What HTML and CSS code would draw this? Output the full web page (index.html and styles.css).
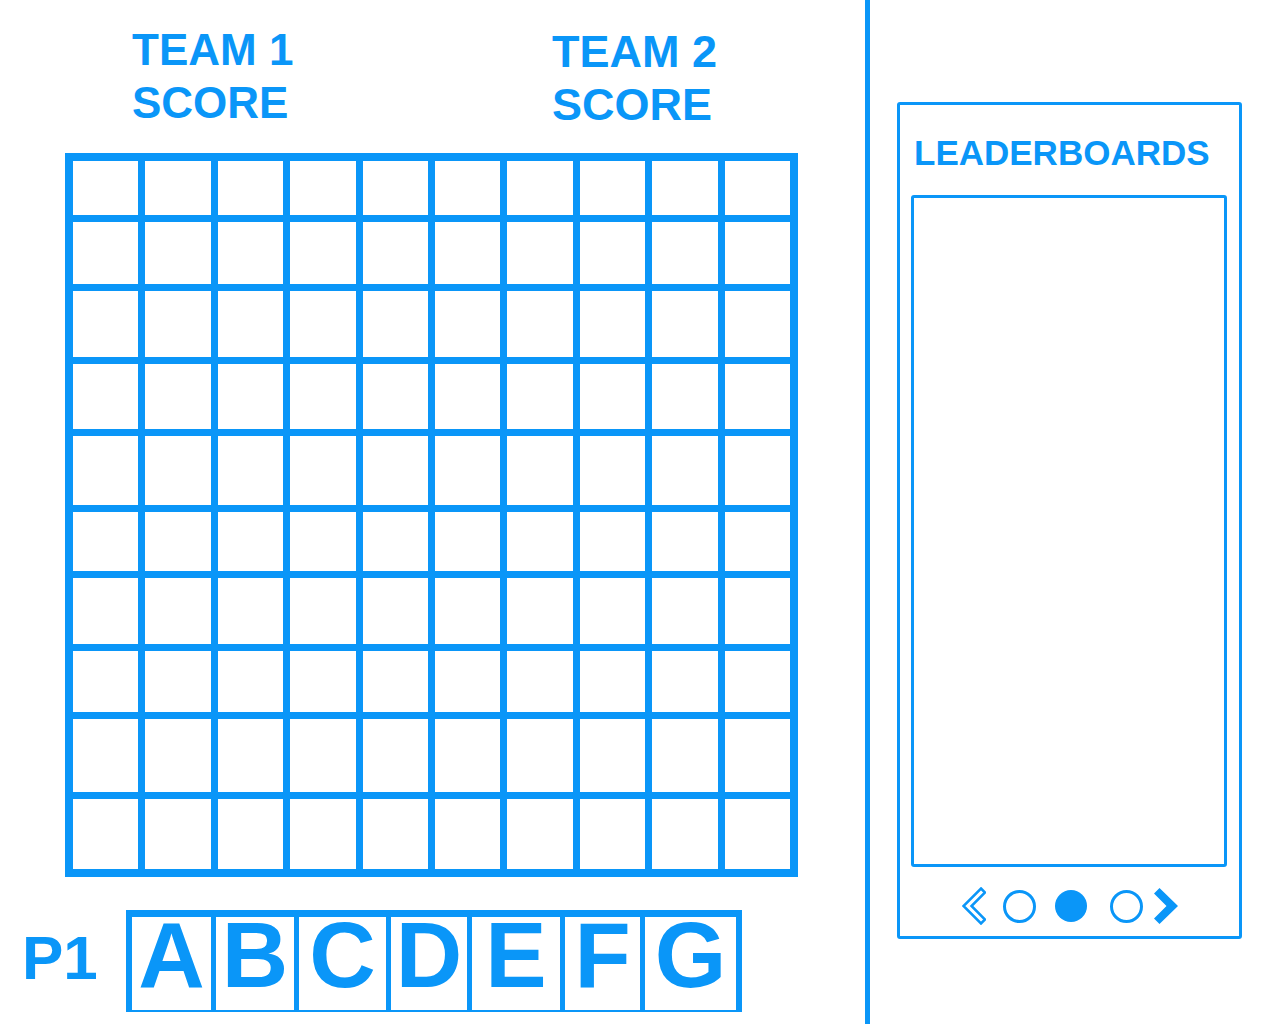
FILE: index.html
```html
<!DOCTYPE html>
<html lang="en">
<head>
<meta charset="utf-8">
<title>Word Grid</title>
<link rel="stylesheet" href="styles.css">
</head>
<body>
<div class="page">
  <main class="board">
    <div class="teams">
      <h2 class="team team-1">TEAM 1<br>SCORE</h2>
      <h2 class="team team-2">TEAM 2<br>SCORE</h2>
    </div>
    <div class="grid">
      <div class="cell"></div><div class="cell"></div><div class="cell"></div><div class="cell"></div><div class="cell"></div><div class="cell"></div><div class="cell"></div><div class="cell"></div><div class="cell"></div><div class="cell"></div>
      <div class="cell"></div><div class="cell"></div><div class="cell"></div><div class="cell"></div><div class="cell"></div><div class="cell"></div><div class="cell"></div><div class="cell"></div><div class="cell"></div><div class="cell"></div>
      <div class="cell"></div><div class="cell"></div><div class="cell"></div><div class="cell"></div><div class="cell"></div><div class="cell"></div><div class="cell"></div><div class="cell"></div><div class="cell"></div><div class="cell"></div>
      <div class="cell"></div><div class="cell"></div><div class="cell"></div><div class="cell"></div><div class="cell"></div><div class="cell"></div><div class="cell"></div><div class="cell"></div><div class="cell"></div><div class="cell"></div>
      <div class="cell"></div><div class="cell"></div><div class="cell"></div><div class="cell"></div><div class="cell"></div><div class="cell"></div><div class="cell"></div><div class="cell"></div><div class="cell"></div><div class="cell"></div>
      <div class="cell"></div><div class="cell"></div><div class="cell"></div><div class="cell"></div><div class="cell"></div><div class="cell"></div><div class="cell"></div><div class="cell"></div><div class="cell"></div><div class="cell"></div>
      <div class="cell"></div><div class="cell"></div><div class="cell"></div><div class="cell"></div><div class="cell"></div><div class="cell"></div><div class="cell"></div><div class="cell"></div><div class="cell"></div><div class="cell"></div>
      <div class="cell"></div><div class="cell"></div><div class="cell"></div><div class="cell"></div><div class="cell"></div><div class="cell"></div><div class="cell"></div><div class="cell"></div><div class="cell"></div><div class="cell"></div>
      <div class="cell"></div><div class="cell"></div><div class="cell"></div><div class="cell"></div><div class="cell"></div><div class="cell"></div><div class="cell"></div><div class="cell"></div><div class="cell"></div><div class="cell"></div>
      <div class="cell"></div><div class="cell"></div><div class="cell"></div><div class="cell"></div><div class="cell"></div><div class="cell"></div><div class="cell"></div><div class="cell"></div><div class="cell"></div><div class="cell"></div>
    </div>
    <div class="rack">
      <span class="player">P1</span>
      <div class="tiles">
        <span class="tile">A</span>
        <span class="tile">B</span>
        <span class="tile">C</span>
        <span class="tile">D</span>
        <span class="tile">E</span>
        <span class="tile">F</span>
        <span class="tile">G</span>
      </div>
    </div>
  </main>
  <div class="divider"></div>
  <aside class="side">
    <section class="leaderboard">
      <h3 class="lb-title">LEADERBOARDS</h3>
      <div class="lb-list"></div>
      <nav class="lb-nav">
        <svg class="nav-prev" width="24" height="38" viewBox="0 0 24 38"><path d="M19 1.5 L23 5.5 L9.5 19 L23 32.5 L19 36.5 L1.5 19 Z" fill="none" stroke="currentColor" stroke-width="2.5"/></svg>
        <svg class="dot dot-1" width="33" height="33" viewBox="0 0 33 33"><circle cx="16.5" cy="16.5" r="15" fill="none" stroke="currentColor" stroke-width="3"/></svg>
        <svg class="dot dot-active" width="32" height="32" viewBox="0 0 32 32"><circle cx="16" cy="16" r="16" fill="currentColor"/></svg>
        <svg class="dot dot-3" width="33" height="33" viewBox="0 0 33 33"><circle cx="16.5" cy="16.5" r="15" fill="none" stroke="currentColor" stroke-width="3"/></svg>
        <svg class="nav-next" width="24" height="36" viewBox="0 0 24 36"><path d="M5.5 0 L24 18 L5.5 36 L0 30.5 L12.5 18 L0 5.5 Z" fill="currentColor"/></svg>
      </nav>
    </section>
  </aside>
</div>
</body>
</html>
```
FILE: styles.css
```css
html, body {
  margin: 0;
  padding: 0;
  background: #ffffff;
}

body {
  font-family: "Liberation Sans", Arial, Helvetica, sans-serif;
  color: #0a96f8;
}

.page {
  display: flex;
  height: 1024px;
  overflow: hidden;
}

.board {
  flex: none;
  width: 865px;
  padding-top: 23px;
  box-sizing: border-box;
}

.teams {
  display: grid;
  grid-template-columns: 420px auto;
  align-items: start;
  padding-left: 132px;
}

.team {
  margin: 0;
  font-size: 45px;
  line-height: 53px;
  font-weight: 700;
}

.team-1 {
  font-size: 44px;
}

.team-2 {
  margin-top: 2px;
}

.grid {
  display: grid;
  grid-template-columns: repeat(10, 1fr);
  grid-template-rows: 54px 62px 66px 65px 69px 59px 66px 61px 73px 70px;
  gap: 7px;
  width: 733px;
  padding: 8px;
  margin: 22px 0 0 65px;
  box-sizing: border-box;
  background: #0a96f8;
}

.cell {
  background: #ffffff;
}

.rack {
  display: flex;
  align-items: flex-start;
  margin-top: 33px;
  padding-left: 22px;
}

.player {
  flex: none;
  width: 104px;
  margin-top: 17px;
  font-size: 62px;
  line-height: 62px;
  font-weight: 700;
}

.tiles {
  display: grid;
  grid-template-columns: 79px 83px 92px 81px 93px 80px 96px;
  border-style: solid;
  border-color: #0a96f8;
  border-width: 7px 6px 2px 6px;
}

.tile {
  height: 93px;
  box-sizing: border-box;
  border-left: 5px solid #0a96f8;
  font-size: 92px;
  line-height: 76px;
  font-weight: 700;
  text-align: center;
}

.tile:first-child {
  border-left: 0;
}

.divider {
  flex: none;
  width: 5px;
  background: #0a96f8;
}

.side {
  flex: none;
  padding: 102px 0 0 27px;
}

.leaderboard {
  width: 345px;
  height: 837px;
  box-sizing: border-box;
  border: 3px solid #0a96f8;
  border-radius: 3px;
  padding: 27px 0 0 11px;
}

.lb-title {
  margin: 0 0 0 3px;
  font-size: 35px;
  line-height: 42px;
  font-weight: 700;
}

.lb-list {
  width: 316px;
  height: 672px;
  margin-top: 21px;
  box-sizing: border-box;
  border: 3px solid #0a96f8;
  border-radius: 3px;
}

.lb-nav {
  display: flex;
  align-items: center;
  margin-top: 20px;
}

.lb-nav svg {
  display: block;
  flex: none;
}

.nav-prev {
  margin-left: 51px;
}

.dot-1 {
  margin-left: 17px;
}

.dot-active {
  margin-left: 19px;
}

.dot-3 {
  margin-left: 23px;
}

.nav-next {
  margin-left: 11px;
}
```
